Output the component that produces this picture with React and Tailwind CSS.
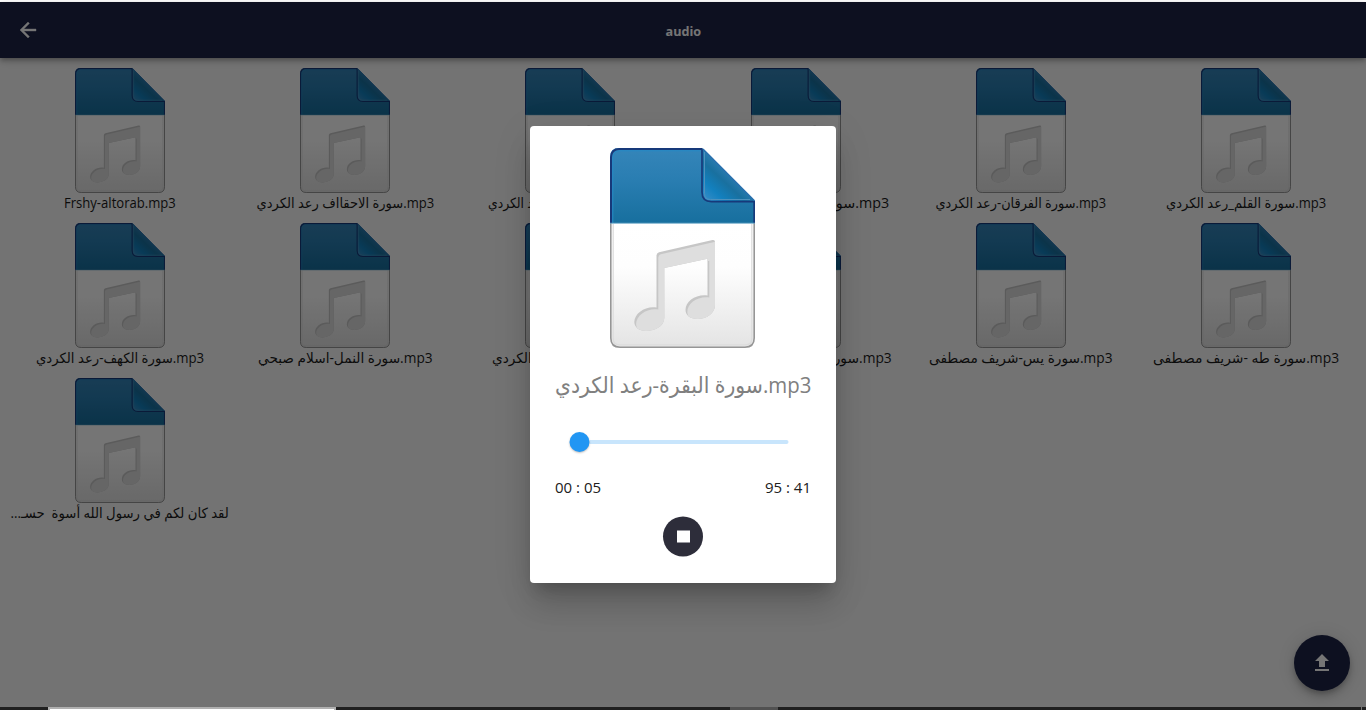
import { useLayoutEffect, useRef, useState } from "react";

const files = [
  { name: "Frshy-altorab.mp3", width: 112 },
  { name: "سورة الاحقااف رعد الكردي.mp3", width: 178 },
  { name: "سورة السجدة-رعد الكردي.mp3", width: 164 },
  { name: "سورة الإسراء-رعد الكردي.mp3", width: 187 },
  { name: "سورة الفرقان-رعد الكردي.mp3", width: 171 },
  { name: "سورة القلم_رعد الكردي.mp3", width: 160 },
  { name: "سورة الكهف-رعد الكردي.mp3", width: 168 },
  { name: "سورة النمل-اسلام صبحي.mp3", width: 175 },
  { name: "سورة طه-رعد الكردي.mp3", width: 156 },
  { name: "سورة مريم-شريف مصطفى.mp3", width: 191 },
  { name: "سورة يس-شريف مصطفى.mp3", width: 184 },
  { name: "سورة طه -شريف مصطفى.mp3", width: 186 },
  { name: "لقد كان لكم في رسول الله أسوة  حسـ...", width: 218, rtl: true },
];

// Squeezes or widens a single line of text to the given width.
function FitText({ children, width, rtl, className }) {
  const ref = useRef(null);
  const [scale, setScale] = useState(1);
  useLayoutEffect(() => {
    setScale(width / ref.current.offsetWidth);
  }, [width]);
  return (
    <span
      ref={ref}
      dir={rtl ? "rtl" : "ltr"}
      className={"inline-block shrink-0 whitespace-pre " + className}
      style={{ transform: `scaleX(${scale})` }}
    >
      {children}
    </span>
  );
}

function Defs() {
  return (
    <svg className="absolute h-0 w-0" aria-hidden="true">
      <defs>
        <linearGradient id="blue" x1="0" y1="0" x2="0" y2="1">
          <stop offset="0" stopColor="#3585b9" />
          <stop offset="0.4" stopColor="#2a7eb2" />
          <stop offset="1" stopColor="#176f9e" />
        </linearGradient>
        <linearGradient id="paper" x1="0" y1="0" x2="0" y2="1">
          <stop offset="0" stopColor="#ffffff" />
          <stop offset="0.35" stopColor="#fefefe" />
          <stop offset="1" stopColor="#e4e4e4" />
        </linearGradient>
        <linearGradient id="fold" gradientUnits="userSpaceOnUse" x1="94" y1="54" x2="120" y2="26">
          <stop offset="0" stopColor="#3b8fc9" />
          <stop offset="0.4" stopColor="#1280be" />
          <stop offset="0.75" stopColor="#19709f" />
          <stop offset="1" stopColor="#2a7bb0" />
        </linearGradient>
        <clipPath id="note">
          <path d={NOTE} />
        </clipPath>
      </defs>
    </svg>
  );
}

const NOTE =
  "M46.500 107.500Q46.500 105 49 104.300L102.500 92Q105 91.500 105 94V157C105 165 97 171 87.500 171C80 171 75.500 167 75.500 162C75.500 153 86 146 97.500 147.500V110.700L54.300 120V170C54.300 178 45 183 36 183C29 183 24.300 179 24.300 174C24.300 165 36 157.500 46.500 159.500Z";

function MusicFile({ className }) {
  return (
    <svg viewBox="0 0 145 200" preserveAspectRatio="none" className={className}>
      <path d="M1 75H144V191Q144 199 136 199H9Q1 199 1 191Z" fill="url(#paper)" />
      <path d="M3.200 76V190.500Q3.200 196.800 9.500 196.800H135.500Q141.800 196.800 141.800 190.500V76" fill="none" stroke="#dddddd" strokeWidth="1.300" />
      <path d="M0.800 75V190Q0.800 199.200 10 199.200H135Q144.200 199.200 144.200 190V75" fill="none" stroke="#969696" strokeWidth="1.600" />
      <path d="M0 75.300V9Q0 0 9 0H92L145 53V75.300Z" fill="url(#blue)" />
      <path d="M1 75V9.500Q1 1 9.500 1H92" fill="none" stroke="#17397a" strokeWidth="2" />
      <path d="M2.800 75V10Q2.800 2.800 10 2.800H90" fill="none" stroke="#2689c5" strokeWidth="1" />
      <path d="M144.200 54V75" stroke="#17397a" strokeWidth="1.800" />
      <path d="M93 1V45.500Q93 53 100.500 53H144Z" fill="url(#fold)" />
      <path d="M94.500 4V45.500Q94.500 51.500 100.500 51.500H140" fill="none" stroke="#4e91bd" strokeWidth="1" />
      <path d="M92 0.500V44Q92 53.600 101.500 53.600H145" fill="none" stroke="#17397a" strokeWidth="1.700" />
      <path d="M93 1L144.500 52.800" fill="none" stroke="#286fae" strokeWidth="1.300" />
      <path d="M0 75.200H145" stroke="#6faaca" strokeWidth="0.800" />
      <path d={NOTE} fill="#c6c6c6" />
      <g clipPath="url(#note)">
        <path d={NOTE} fill="#dedede" transform="translate(1.800 2)" />
      </g>
    </svg>
  );
}

export default function App() {
  return (
    <div className="flex h-[710px] w-[1366px] flex-col overflow-hidden bg-white pt-0.5 font-['Open_Sans','Noto_Sans','DejaVu_Sans',sans-serif]">
      <Defs />
      <div className="relative flex h-[705px] shrink-0 flex-col bg-[#fafafa]">
        <header className="z-0 grid h-14 shrink-0 grid-cols-[56px_1fr_56px] items-center bg-[#1d2347] text-white shadow-[0_2px_4px_-1px_rgba(0,0,0,0.2),0_4px_5px_rgba(0,0,0,0.14),0_1px_10px_rgba(0,0,0,0.12)]">
          <svg viewBox="0 0 24 24" className="size-6 justify-self-center" fill="currentColor" stroke="currentColor" strokeWidth="0.4">
            <path d="M20 11H7.830l5.590-5.590L12 4l-8 8 8 8 1.410-1.410L7.830 13H20v-2z" />
          </svg>
          <h1 className="flex justify-center pt-[3px] text-[13px] font-bold">
            <FitText width={36} className="">audio</FitText>
          </h1>
        </header>
        <main className="grid grid-cols-6 px-[7px] pt-2.5">
          {files.map((f) => (
            <div key={f.name} className="flex h-[155px] min-w-0 flex-col items-center">
              <MusicFile className="h-[125px] w-[90px] shrink-0" />
              <div className="flex h-5 w-full items-center justify-center text-[14px] leading-5 text-[#1c1c1c]">
                <FitText width={f.width} rtl={f.rtl} className="">{f.name}</FitText>
              </div>
            </div>
          ))}
        </main>
        <button className="absolute right-4 bottom-4 flex size-14 items-center justify-center rounded-full bg-[#1d2347] text-white shadow-[0_3px_5px_-1px_rgba(0,0,0,0.2),0_6px_10px_rgba(0,0,0,0.14),0_1px_18px_rgba(0,0,0,0.12)]">
          <svg viewBox="0 0 24 24" className="size-6" fill="currentColor">
            <path d="M9 16h6v-6h4l-7-7-7 7h4zm-4 2h14v2H5z" />
          </svg>
        </button>

        <div className="absolute inset-0 flex items-center justify-center bg-black/54">
          <section className="flex h-[457px] w-[306px] flex-col items-center rounded bg-white px-[25px] pt-[22px] shadow-[0_11px_15px_-7px_rgba(0,0,0,0.2),0_24px_30px_-2px_rgba(0,0,0,0.14),0_9px_40px_2px_rgba(0,0,0,0.08)]">
            <MusicFile className="mr-px h-[200px] w-[145px] shrink-0" />
            <div className="mt-[18px] flex h-9 w-full items-center justify-center text-[22px] text-[#808080]">
              <FitText width={256} className="">سورة البقرة-رعد الكردي.mp3</FitText>
            </div>
            <div className="mt-[30px] flex h-5 w-[219px] -translate-x-[4.500px] items-center">
              <div className="z-10 size-5 shrink-0 rounded-full bg-[#2196f3] shadow-[0_1px_2px_rgba(0,0,0,0.25)]" />
              <div className="h-1 flex-1 rounded-r-full bg-[#c8e5fc]" />
            </div>
            <div className="mt-[23px] flex h-6 w-full items-center justify-between text-[15px] text-[#202020]">
              <span>00 : 05</span>
              <span>95 : 41</span>
            </div>
            <button className="mt-[17px] flex size-10 translate-y-[0.500px] items-center justify-center rounded-full bg-[#2d2d3a]">
              <span className="h-3 w-[13px] bg-white" />
            </button>
          </section>
        </div>
      </div>
      <footer className="flex h-[3px] shrink-0 bg-[#202020]">
        <div className="ml-12 w-72 border-x-2 border-t-2 border-[#b0b0b0] bg-white" />
        <div className="ml-[394px] w-12 bg-[#515151]" />
        <div className="ml-[583px] w-px bg-[#777777]" />
      </footer>
    </div>
  );
}
